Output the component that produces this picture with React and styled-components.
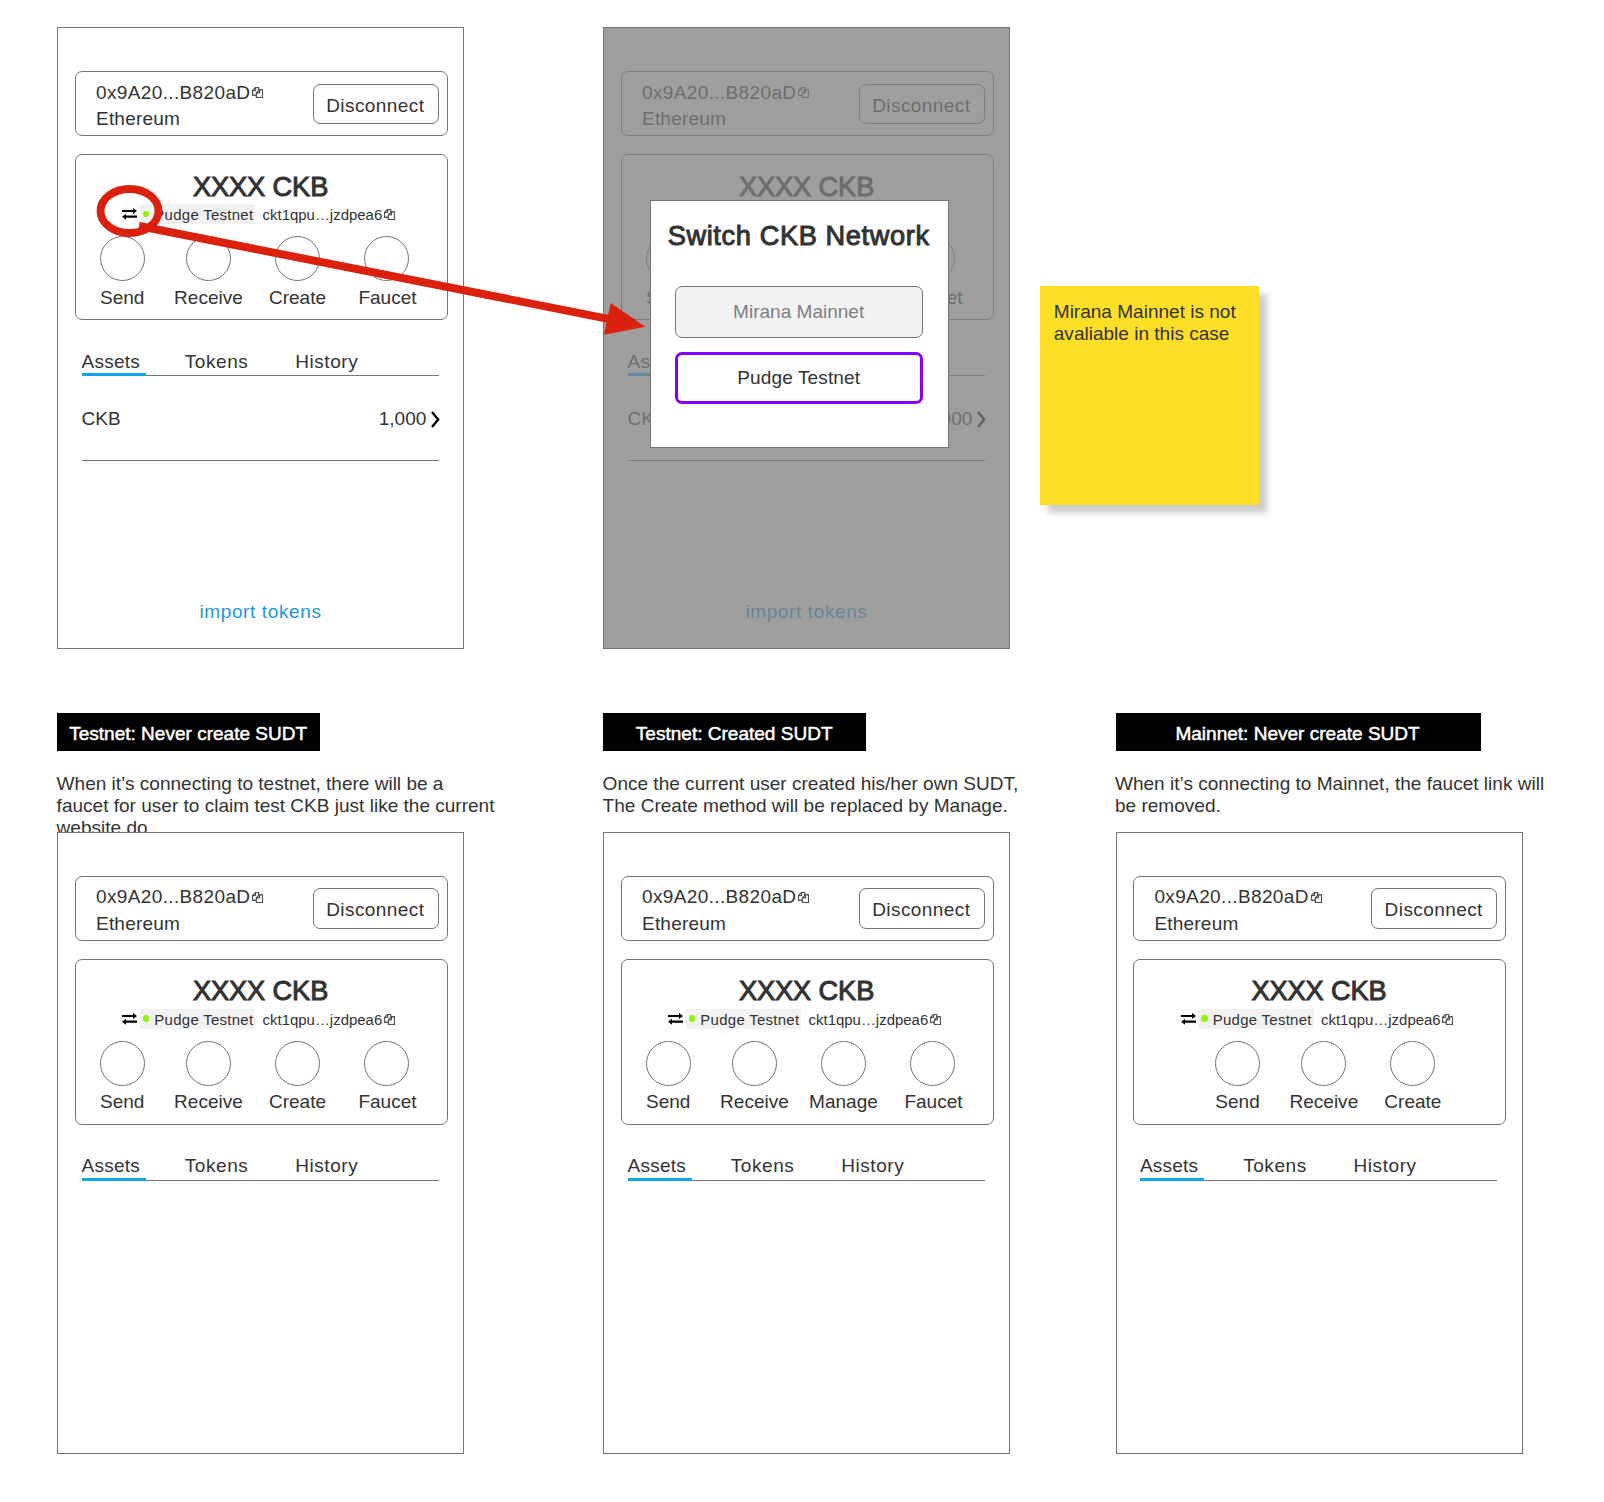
import React from "react";
import styled, { createGlobalStyle } from "styled-components";

const GlobalStyle = createGlobalStyle`
  body {
    margin: 0;
    background: #fff;
    color: #333;
    font-family: "Liberation Sans", Arial, sans-serif;
    font-size: 19.04px;
    line-height: 22px;
  }
  *, *::before, *::after { box-sizing: border-box; }
`;

const line = "#757575";

const Board = styled.main`
  position: relative;
  width: 1604px;
  height: 1502px;
  overflow: hidden;
  padding: 27.3px 0 0 57.2px;
`;

const FlowRow = styled.section`
  display: flex;
  align-items: flex-start;
  height: 686px;
`;

const CaseRow = styled.section`
  display: grid;
  grid-template-columns: 546px 512.4px 450px;
`;

const Screen = styled.article`
  position: relative;
  flex: none;
  width: 407px;
  height: 622px;
  margin-right: ${(p) => p.$gap || 0}px;
  padding: 43px 15.6px 0 16.8px;
  border: 1px solid ${line};
  background: #fff;
`;

const AccountCard = styled.div`
  display: flex;
  justify-content: space-between;
  align-items: center;
  height: 65px;
  padding: 0 7.5px 0 20px;
  border: 1px solid ${line};
  border-radius: 7px;
`;

const AccountText = styled.div`
  display: flex;
  flex-direction: column;
  gap: 4.4px;
  margin-top: 4.2px;
`;

const Address = styled.span`
  display: flex;
  align-items: center;
  gap: 2px;
  letter-spacing: 0.35px;
`;

const Chain = styled.span`
  letter-spacing: 0.2px;
`;

const DisconnectButton = styled.button`
  width: 126px;
  height: 40.4px;
  padding: 4px 1.6px 0 0;
  border: 1px solid ${line};
  border-radius: 7px;
  background: transparent;
  color: inherit;
  font: inherit;
  letter-spacing: 0.4px;
`;

const WalletCard = styled.div`
  display: flex;
  flex-direction: column;
  align-items: center;
  height: 165.8px;
  margin-top: 18.2px;
  padding-top: 15.4px;
  border: 1px solid ${line};
  border-radius: 7px;
`;

const Balance = styled.h1`
  margin: 0 1.4px 1.6px 0;
  font-size: 27.2px;
  font-weight: 400;
  line-height: 32px;
  letter-spacing: -0.1px;
  -webkit-text-stroke: 1px currentColor;
`;

const NetworkRow = styled.div`
  display: flex;
  align-items: center;
  align-self: flex-start;
  height: 20px;
  margin-left: 46.4px;
  font-size: 14.96px;
  line-height: 20px;
`;

const NetworkTag = styled.span`
  display: flex;
  align-items: center;
  width: 115.4px;
  height: 20px;
  margin: 0 7.2px 0 2.6px;
  padding: 1px 0 0 3px;
  background: #f2f2f2;
  white-space: nowrap;
  letter-spacing: 0.28px;
`;

const StatusDot = styled.i`
  width: 6.4px;
  height: 6.4px;
  margin: -2px 5px 0 0;
  border-radius: 50%;
  background: #8ff500;
`;

const CkbAddress = styled.span`
  display: flex;
  align-items: center;
  gap: 1.6px;
  padding-top: 1px;
`;

const Actions = styled.div`
  display: grid;
  grid-template-columns: 83.6px repeat(${(p) => p.$count - 1}, 89px);
  align-self: flex-start;
  margin: 11.8px 0 0 ${(p) => (p.$count === 3 ? 61.4 : 4.4)}px;
`;

const Action = styled.div`
  display: flex;
  flex-direction: column;
  align-items: center;
  gap: 5.2px;
  white-space: nowrap;
`;

const ActionCircle = styled.span`
  width: 45.2px;
  height: 45.2px;
  border: 1px solid ${line};
  border-radius: 50%;
`;

const ActionLabel = styled.span`
  padding-left: ${(p) => (p.$last ? 2 : 0)}px;
`;

const Tabs = styled.nav`
  display: flex;
  height: 25.4px;
  margin: 30.4px 8.6px 0 6.6px;
  border-bottom: 1.4px solid ${line};
`;

const Tab = styled.span`
  flex: none;
  width: ${(p) => p.$width}px;
  letter-spacing: 0.55px;
`;

const ActiveTab = styled(Tab)`
  height: 25.4px;
  margin-right: 38.8px;
  border-bottom: 3px solid #0ea5ee;
  letter-spacing: 0.2px;
`;

const AssetRow = styled.div`
  display: flex;
  align-items: center;
  justify-content: space-between;
  height: 84.6px;
  margin: 0 8.6px 0 6.6px;
  padding-top: 2.8px;
  border-bottom: 1px solid ${line};
`;

const Amount = styled.span`
  display: flex;
  align-items: center;
  gap: 4.4px;
  margin-right: -0.6px;
  letter-spacing: -0.05px;
`;

const ImportLink = styled.a`
  display: block;
  margin: 140.2px 1.6px 0 0;
  color: #1c98d8;
  text-align: center;
  letter-spacing: 0.6px;
`;

const Overlay = styled.div`
  position: absolute;
  inset: 0;
  background: rgba(127, 127, 127, 0.76);
`;

const Modal = styled.div`
  position: absolute;
  left: 46.2px;
  top: 171.7px;
  display: flex;
  flex-direction: column;
  align-items: center;
  width: 298.4px;
  height: 247.6px;
  padding: 19px 1.8px 0 0;
  border: 1px solid ${line};
  background: #fff;
`;

const ModalTitle = styled.h2`
  margin: 0 0 34px;
  font-size: 27.2px;
  font-weight: 400;
  line-height: 32px;
  letter-spacing: 0.62px;
  white-space: nowrap;
  -webkit-text-stroke: 1px currentColor;
`;

const NetworkOption = styled.button`
  width: 248px;
  height: 52.4px;
  margin-bottom: 13.2px;
  padding: 0;
  border: ${(p) => (p.$selected ? "3px solid #8400ff" : `1px solid ${line}`)};
  border-radius: 7px;
  background: ${(p) => (p.$selected ? "#fff" : "#f2f2f2")};
  color: ${(p) => (p.$selected ? "#333" : "#808080")};
  font: inherit;
  letter-spacing: ${(p) => (p.$selected ? 0.12 : 0)}px;
`;

const StickyNote = styled.aside`
  width: 219.4px;
  height: 219.6px;
  margin: 258.4px 0 0 29.6px;
  padding: 15px 12px 0 14px;
  background: #ffde26;
  box-shadow: 8px 8px 6px rgba(0, 0, 0, 0.2);
`;

const CaseColumn = styled.div`
  display: flex;
  flex-direction: column;
`;

const Banner = styled.h3`
  width: ${(p) => p.$width}px;
  height: 38px;
  margin: 0;
  padding-right: 1px;
  background: #000;
  color: #fff;
  font-size: inherit;
  font-weight: 400;
  line-height: 41px;
  text-align: center;
  -webkit-text-stroke: 0.5px currentColor;
`;

const Description = styled.p`
  width: 441px;
  height: 59.2px;
  margin: 21.4px 0 0 -0.6px;
`;

const Annotation = styled.svg`
  position: absolute;
  left: 0;
  top: 0;
  pointer-events: none;
`;

const CopyIcon = ({ size = 12 }) => (
  <svg width={size} height={size} viewBox="0 0 1792 1792" fill="#333" stroke="#333" strokeWidth="40">
    <path d="M1696 384q40 0 68 28t28 68v1216q0 40-28 68t-68 28h-960q-40 0-68-28t-28-68v-288h-544q-40 0-68-28t-28-68v-672q0-40 20-88t48-76l408-408q28-28 76-48t88-20h416q40 0 68 28t28 68v328q68-40 128-40h416zm-544 213l-299 299h299v-299zm-640-384l-299 299h299v-299zm196 647l316-316v-416h-384v416q0 40-28 68t-68 28h-416v640h512v-256q0-40 20-88t48-76zm956 804v-1152h-384v416q0 40-28 68t-68 28h-416v640h896z" />
  </svg>
);

const SwapIcon = () => (
  <svg width="15" height="12" viewBox="0 0 15 12" fill="#000">
    <path d="M0 2h11V0l4 3.1-4 3V4H0zM15 7.6H4V5.8L0 8.8l4 3V9.8h11z" />
  </svg>
);

const ChevronIcon = () => (
  <svg width="9" height="17" viewBox="0 0 9 17" fill="none" stroke="#000" strokeWidth="2.3">
    <path d="M1 1l6.2 7.5L1 16" />
  </svg>
);

function WalletScreen({ actions, showAssets, gap, children }) {
  return (
    <Screen $gap={gap}>
      <AccountCard>
        <AccountText>
          <Address>0x9A20...B820aD<CopyIcon size={11} /></Address>
          <Chain>Ethereum</Chain>
        </AccountText>
        <DisconnectButton>Disconnect</DisconnectButton>
      </AccountCard>
      <WalletCard>
        <Balance>XXXX CKB</Balance>
        <NetworkRow>
          <SwapIcon />
          <NetworkTag><StatusDot />Pudge Testnet</NetworkTag>
          <CkbAddress>ckt1qpu…jzdpea6<CopyIcon size={11} /></CkbAddress>
        </NetworkRow>
        <Actions $count={actions.length}>
          {actions.map((name, index) => (
            <Action key={name}>
              <ActionCircle />
              <ActionLabel $last={index === 3}>{name}</ActionLabel>
            </Action>
          ))}
        </Actions>
      </WalletCard>
      <Tabs>
        <ActiveTab $width={64.4}>Assets</ActiveTab>
        <Tab $width={110.4}>Tokens</Tab>
        <Tab $width={70}>History</Tab>
      </Tabs>
      {showAssets && (
        <>
          <AssetRow>
            <span>CKB</span>
            <Amount>1,000<ChevronIcon /></Amount>
          </AssetRow>
          <ImportLink>import tokens</ImportLink>
        </>
      )}
      {children}
    </Screen>
  );
}

const baseActions = ["Send", "Receive", "Create", "Faucet"];

const cases = [
  {
    title: "Testnet: Never create SUDT",
    width: 263,
    text: "When it’s connecting to testnet, there will be a faucet for user to claim test CKB just like the current website do.",
    actions: baseActions,
  },
  {
    title: "Testnet: Created SUDT",
    width: 263,
    text: "Once the current user created his/her own SUDT, The Create method will be replaced by Manage.",
    actions: ["Send", "Receive", "Manage", "Faucet"],
  },
  {
    title: "Mainnet: Never create SUDT",
    width: 365,
    text: "When it’s connecting to Mainnet, the faucet link will be removed.",
    actions: ["Send", "Receive", "Create"],
  },
];

export default function App() {
  return (
    <>
      <GlobalStyle />
      <Board>
        <FlowRow>
          <WalletScreen actions={baseActions} showAssets gap={139} />
          <WalletScreen actions={baseActions} showAssets>
            <Overlay />
            <Modal>
              <ModalTitle>Switch CKB Network</ModalTitle>
              <NetworkOption disabled>Mirana Mainnet</NetworkOption>
              <NetworkOption $selected>Pudge Testnet</NetworkOption>
            </Modal>
          </WalletScreen>
          <StickyNote>Mirana Mainnet is not avaliable in this case</StickyNote>
        </FlowRow>
        <CaseRow>
          {cases.map((item) => (
            <CaseColumn key={item.title}>
              <Banner $width={item.width}>{item.title}</Banner>
              <Description>{item.text}</Description>
              <WalletScreen actions={item.actions} />
            </CaseColumn>
          ))}
        </CaseRow>
        <Annotation width="1604" height="700" viewBox="0 0 1604 700">
          <ellipse cx="129.5" cy="211" rx="29" ry="22" fill="none" stroke="#db200d" strokeWidth="7.8" />
          <path d="M139 226L612 319.6" stroke="#db200d" strokeWidth="8" />
          <path d="M645.4 326.7L610.7 303L604 334.7z" fill="#db200d" />
        </Annotation>
      </Board>
    </>
  );
}
